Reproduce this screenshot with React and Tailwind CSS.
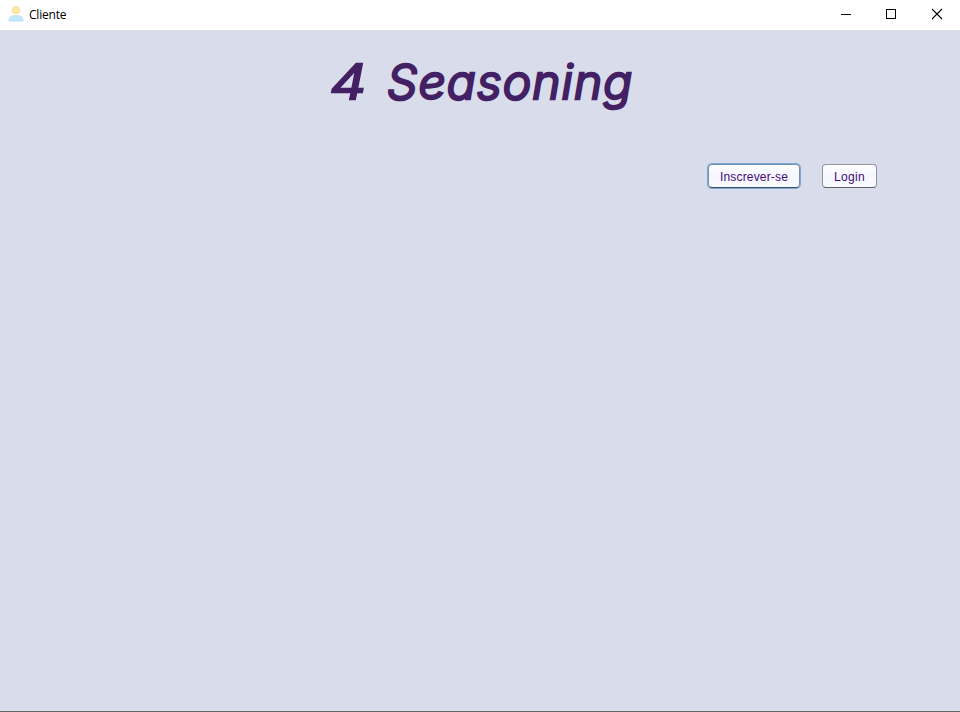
export default function App() {
  return (
    <div className="flex h-[712px] w-[960px] flex-col overflow-hidden border-b border-[#666] bg-[#d9ddeb]">
      <header className="flex h-[30px] shrink-0 items-center bg-white">
        <svg className="ml-2 h-4 w-4 overflow-visible" viewBox="0 0 16 16">
          <circle cx="8" cy="3.2" r="4" fill="#ffe8a3" stroke="#f0dc98" strokeWidth="0.5" />
          <path d="M0.7 14.2Q1 8.8 5.5 8.5H10.5Q15 8.8 15.3 14.2Z" fill="#c2e7ff" stroke="#acd6f2" strokeWidth="0.5" />
        </svg>
        <span className="ml-[5px] font-['Open_Sans',sans-serif] text-[12px] leading-4 tracking-[-0.2px] text-black">Cliente</span>
        <svg className="ml-auto h-[30px] w-[137px]" viewBox="0 0 137 30" fill="none" stroke="#000" shapeRendering="crispEdges">
          <path d="M18 14.5H28M63.5 9.5H72.5V18.5H63.5Z" />
          <path d="M109 9L119 19M119 9L109 19" strokeWidth="1.1" shapeRendering="auto" />
        </svg>
      </header>
      <main className="flex flex-col">
        <h1 className="mt-[15px] ml-[330px] flex h-[79px] font-['Inter',sans-serif] text-[48px] leading-[74px] font-light text-[#431f63] italic [-webkit-text-stroke:2.6px_#431f63] [font-feature-settings:'cv11']">
          <span className="w-[57px] origin-left scale-x-[1.2]">4</span>
          <span className="tracking-[1.1px] whitespace-nowrap">Seasoning</span>
        </h1>
        <nav className="mt-10 mr-[83px] flex justify-end gap-[22px] font-['Liberation_Sans',sans-serif] text-[12px] text-[#400a78]">
          <button className="h-6 w-[92px] rounded-[4px] border border-[#7591ad] border-b-[#3d5063] bg-linear-to-b from-white via-[#f5f6ff] to-[#fafbff] pt-px tracking-[0.16px] shadow-[0_0_0_1px_#7ba9d3]">Inscrever-se</button>
          <button className="h-6 w-[55px] rounded-[4px] border border-[#92959f] border-b-[#5c5f68] bg-linear-to-b from-white via-[#f5f6ff] to-[#fafbff] pt-px tracking-[0.3px]">Login</button>
        </nav>
      </main>
    </div>
  );
}
